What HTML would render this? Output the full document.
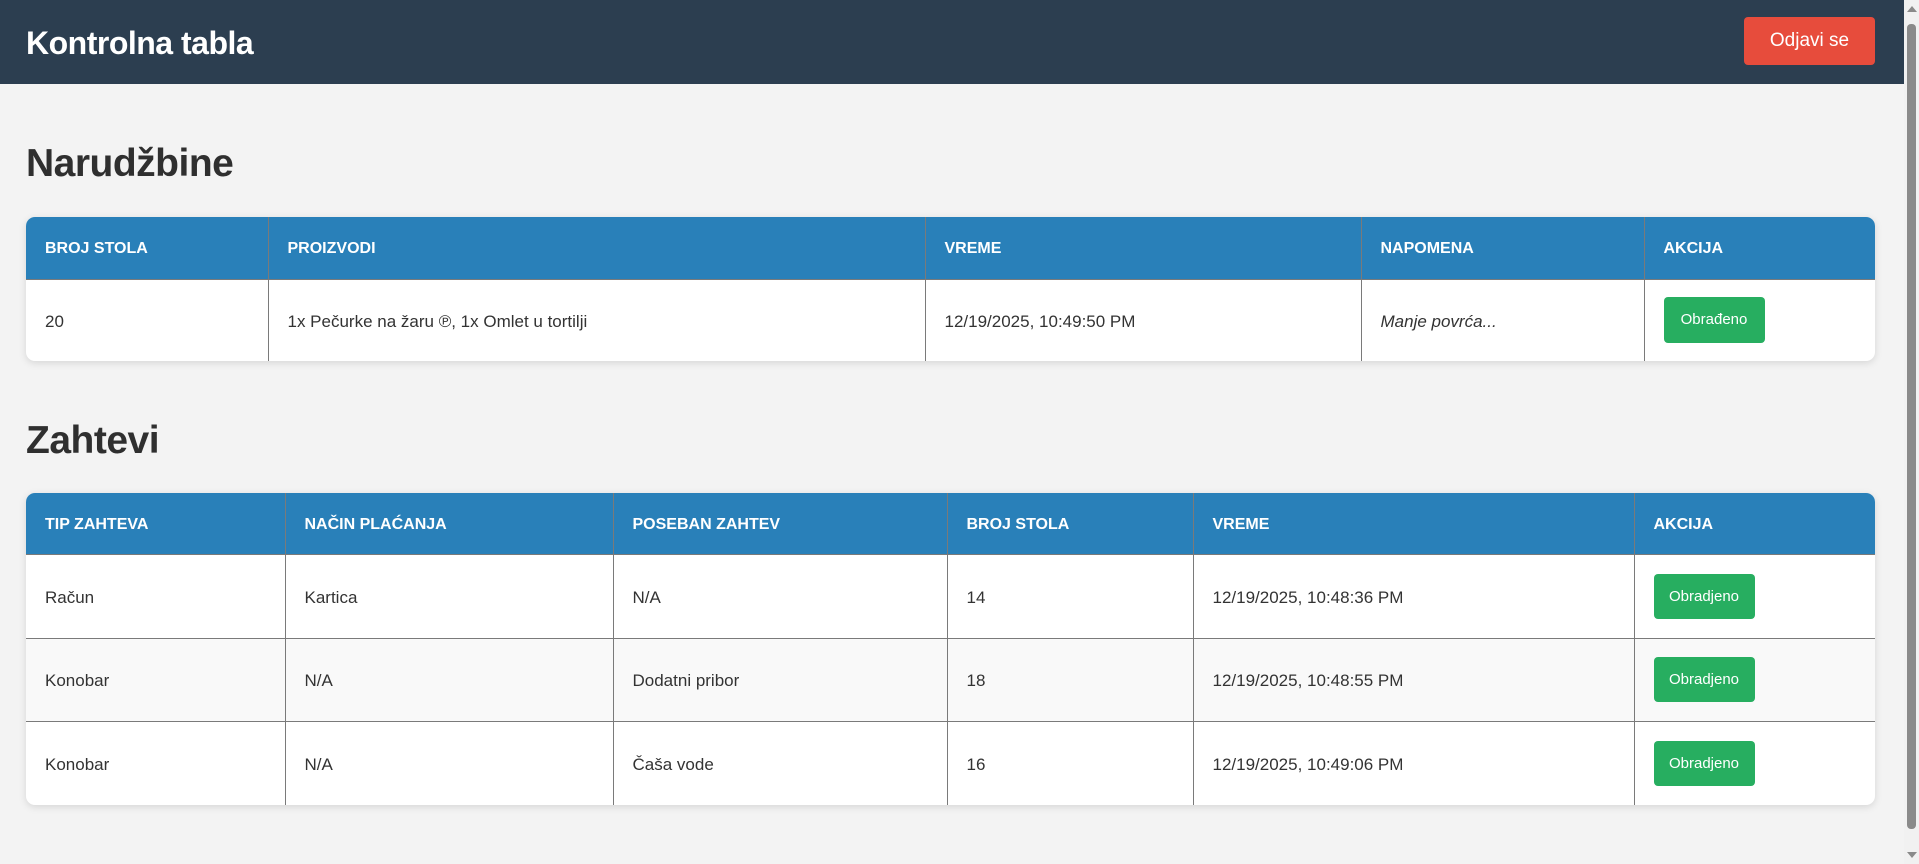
<!DOCTYPE html>
<html><head><meta charset="utf-8"><style>
*{box-sizing:border-box;margin:0;padding:0}
html,body{width:1919px;height:864px;overflow:hidden}
body{background:#f3f3f3;font-family:"Liberation Sans",sans-serif;color:#333;position:relative}
.hdr{position:absolute;left:0;top:0;width:1904px;height:84px;background:#2c3e50}
.hdr h1{position:absolute;left:26px;top:25px;font-size:32px;color:#fff;font-weight:bold;letter-spacing:-0.5px}
.out{position:absolute;left:1744px;top:17px;width:131px;height:48px;background:#e74c3c;border-radius:4px;color:#fff;font-size:19px;text-align:center;line-height:48px}
.sb{position:absolute;left:1904px;top:0;width:15px;height:864px;background:#f1f1f1}
.sb .th{position:absolute;left:3px;top:24px;width:9px;height:805px;background:#8a8a8a;border-radius:4px}
.sb .up{position:absolute;left:3px;top:6px;border-left:5px solid transparent;border-right:5px solid transparent;border-bottom:6px solid #8a8a8a}
.sb .dn{position:absolute;left:3px;top:852px;border-left:5px solid transparent;border-right:5px solid transparent;border-top:6px solid #8a8a8a}
h2{position:absolute;left:26px;font-size:39px;font-weight:bold;color:#2f2f2f;letter-spacing:-0.5px}
.card{position:absolute;left:26px;width:1849px;background:#fff;border-radius:9px;box-shadow:0 2px 8px rgba(0,0,0,.12);overflow:hidden}
table{border-collapse:collapse;width:100%;table-layout:fixed}
th{background:#2980b9;color:#fff;text-align:left;font-size:16px;font-weight:bold;padding:3px 0 0 19px;border-left:1px solid #7a7a7a;border-bottom:1px solid #7a7a7a}
td{font-size:17px;padding:3px 0 0 19px;border-left:1px solid #7a7a7a;border-top:1px solid #7a7a7a;color:#333}
th:first-child,td:first-child{border-left:none}
tr:first-child td{border-top:none}
.alt td{background:#f9f9f9}
.g{display:inline-block;background:#27ae60;color:#fff;font-size:15px;border-radius:4px;text-align:center}
</style></head><body>
<div class="hdr"><h1>Kontrolna tabla</h1><div class="out">Odjavi se</div></div>
<div class="sb"><div class="up"></div><div class="th"></div><div class="dn"></div></div>

<h2 style="top:142px">Narudžbine</h2>
<div class="card" style="top:217px;height:144px">
<table>
<colgroup><col style="width:242px"><col style="width:657px"><col style="width:436px"><col style="width:283px"><col></colgroup>
<thead><tr style="height:62px"><th>BROJ STOLA</th><th>PROIZVODI</th><th>VREME</th><th>NAPOMENA</th><th>AKCIJA</th></tr></thead>
<tbody><tr style="height:82px"><td>20</td><td>1x Pečurke na žaru ℗, 1x Omlet u tortilji</td><td>12/19/2025, 10:49:50 PM</td><td><i>Manje povrća...</i></td><td style="padding-top:0"><span class="g" style="width:101px;height:46px;line-height:46px">Obrađeno</span></td></tr></tbody>
</table></div>

<h2 style="top:419px">Zahtevi</h2>
<div class="card" style="top:493px;height:312px">
<table>
<colgroup><col style="width:259px"><col style="width:328px"><col style="width:334px"><col style="width:246px"><col style="width:441px"><col></colgroup>
<thead><tr style="height:61px"><th>TIP ZAHTEVA</th><th>NAČIN PLAĆANJA</th><th>POSEBAN ZAHTEV</th><th>BROJ STOLA</th><th>VREME</th><th>AKCIJA</th></tr></thead>
<tbody>
<tr style="height:84px"><td>Račun</td><td>Kartica</td><td>N/A</td><td>14</td><td>12/19/2025, 10:48:36 PM</td><td style="padding-top:0"><span class="g" style="width:101px;height:45px;line-height:45px">Obradjeno</span></td></tr>
<tr class="alt" style="height:83px"><td>Konobar</td><td>N/A</td><td>Dodatni pribor</td><td>18</td><td>12/19/2025, 10:48:55 PM</td><td style="padding-top:0"><span class="g" style="width:101px;height:45px;line-height:45px">Obradjeno</span></td></tr>
<tr style="height:84px"><td>Konobar</td><td>N/A</td><td>Čaša vode</td><td>16</td><td>12/19/2025, 10:49:06 PM</td><td style="padding-top:0"><span class="g" style="width:101px;height:45px;line-height:45px">Obradjeno</span></td></tr>
</tbody></table></div>
</body></html>
